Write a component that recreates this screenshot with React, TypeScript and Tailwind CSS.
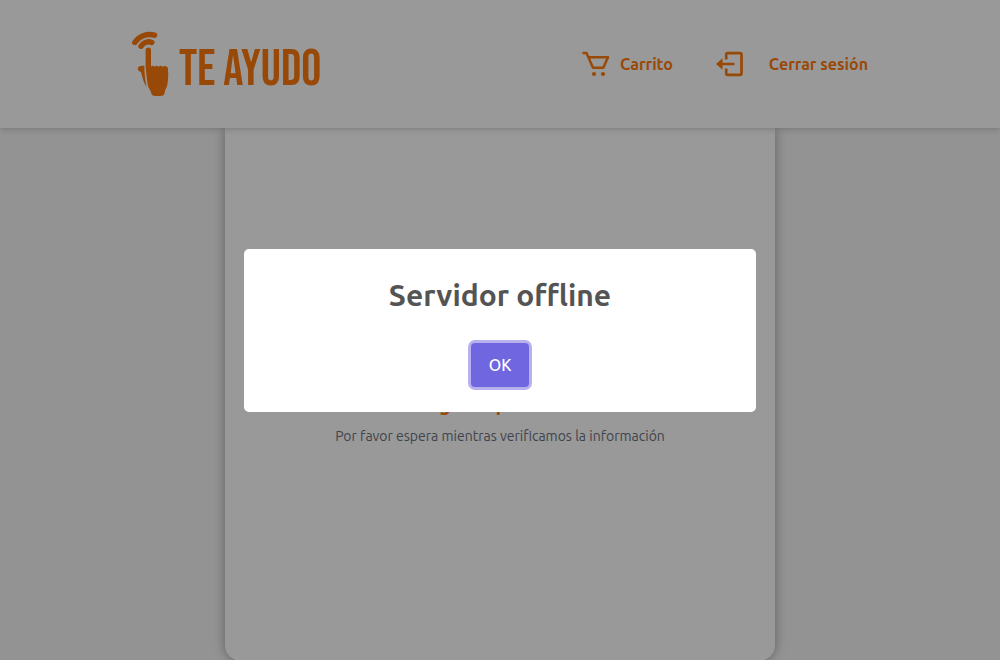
import React from "react";

function Logo() {
  return (
    <a href="#inicio" className="flex h-16 items-center gap-[7px] text-[#ff7a0c]">
      <svg width="40" height="66" viewBox="0 0 40 66" fill="none" aria-hidden="true">
        <g stroke="currentColor" strokeWidth="5.400" strokeLinecap="round">
          <path d="M2.800 11.500C7 4.800 15.500 2 22.500 4.200" />
          <path d="M9 15.200C11.400 11.400 16 9.900 19.800 11.400" />
        </g>
        <path
          fill="currentColor"
          d="M13.600 19.200a2.700 2.700 0 0 1 5.400 0V35.500c1-1 2.700-1 3.700.2 1-1.200 2.900-1.200 3.900 0 1-1.200 2.900-1.200 3.900 0 1.800-1.300 4.700-.6 5.400 1.300.7 6.500.3 12-.6 17-.6 3-2.400 4.500-2.600 7.300-.2 2.800-1.500 3.700-4.500 3.700h-5c-2.500 0-3.500-1-4.300-4-.8-3-2.800-4.300-3.200-7.300-.9-7-1.600-12-2.100-18.200z"
        />
        <path
          fill="currentColor"
          d="M5.800 37.500c0-2.200 2.700-3.300 6.500-2.700.2 8 .9 14 2.200 21.200-2.700-3.700-4.200-10-5.600-15.200-1.800-.1-3.100-1.500-3.100-3.300z"
        />
      </svg>
      <span className="pt-3 font-['Bebas_Neue','Oswald','Roboto_Condensed','Liberation_Sans_Narrow',sans-serif] text-[50px] leading-none font-normal whitespace-nowrap">
        TE AYUDO
      </span>
    </a>
  );
}

function CartIcon() {
  return (
    <svg width="28" height="28" viewBox="0 0 28 28" fill="none" aria-hidden="true">
      <path
        d="M.5 3h4l6.500 14.700h10.300L26 7.200H7"
        stroke="currentColor"
        strokeWidth="2.500"
        strokeLinejoin="round"
      />
      <circle cx="12" cy="24" r="2.100" fill="currentColor" />
      <circle cx="21" cy="24" r="2.100" fill="currentColor" />
    </svg>
  );
}

function LogoutIcon() {
  return (
    <svg width="28" height="28" viewBox="0 0 28 28" fill="none" aria-hidden="true">
      <path
        d="M10.200 9.500V4.700a1.500 1.500 0 0 1 1.500-1.500H24a1.500 1.500 0 0 1 1.500 1.500v18.600a1.500 1.500 0 0 1-1.500 1.500H11.700a1.500 1.500 0 0 1-1.500-1.500v-4.800M18.500 14H5"
        stroke="currentColor"
        strokeWidth="2.700"
      />
      <path d="M0 14l6.500-5.800v11.600z" fill="currentColor" />
    </svg>
  );
}

function Header() {
  return (
    <header className="relative z-10 bg-white px-8 shadow-md">
      <div className="mx-auto flex h-32 max-w-[736px] items-center justify-between">
        <Logo />
        <nav className="flex items-center gap-[43px] text-base font-semibold text-[#ff7a0c]">
          <a href="#carrito" className="flex items-center gap-[10px]">
            <CartIcon />
            Carrito
          </a>
          <a href="#salir" className="flex items-center gap-[25px]">
            <LogoutIcon />
            Cerrar sesión
          </a>
        </nav>
      </div>
    </header>
  );
}

function StatusCard() {
  return (
    <section className="mx-auto w-full max-w-[550px] rounded-b-2xl bg-white px-6 pt-65 pb-[213px] text-center shadow-[0_0_12px_rgba(0,0,0,0.35)]">
      <h1 className="text-xl leading-8 font-bold text-[#ff7a0c]">Pago en proceso...</h1>
      <p className="mt-1 text-sm leading-6 text-[#6b7280]">
        Por favor espera mientras verificamos la información
      </p>
    </section>
  );
}

function OfflineDialog() {
  return (
    <div className="fixed inset-0 z-20 flex items-center justify-center bg-black/40 p-3">
      <div
        role="alertdialog"
        aria-modal="true"
        aria-labelledby="dialog-title"
        className="flex w-full max-w-lg flex-col items-center rounded-[5px] bg-white px-5 pt-6 pb-[25px]"
      >
        <h2 id="dialog-title" className="text-[30px] leading-[44px] font-semibold text-[#545454]">
          Servidor offline
        </h2>
        <button
          type="button"
          className="mt-[26px] h-11 rounded bg-[#7066e0] px-[18px] text-base font-medium text-white ring-[3px] ring-[#b7b2ef]"
        >
          OK
        </button>
      </div>
    </div>
  );
}

export default function App() {
  return (
    <div className="min-h-screen bg-[#f5f5f5] font-['Ubuntu','Noto_Sans',sans-serif]">
      <Header />
      <main>
        <StatusCard />
      </main>
      <OfflineDialog />
    </div>
  );
}
